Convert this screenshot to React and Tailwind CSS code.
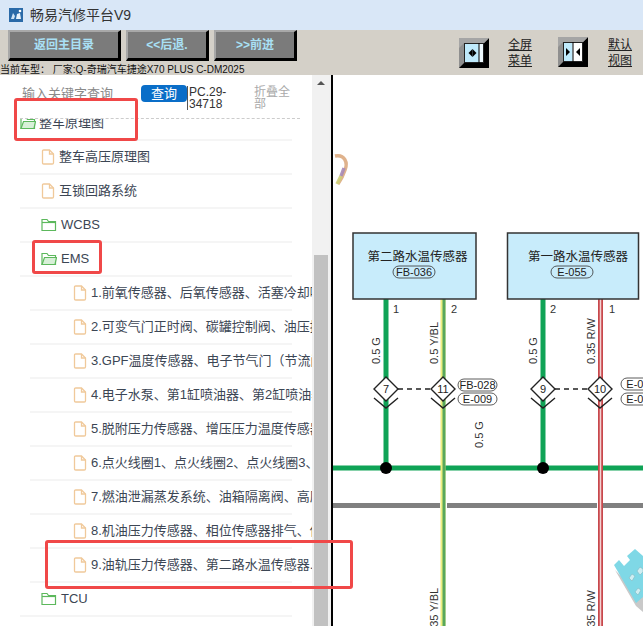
const cjk = 'font-["Liberation_Sans","Noto_Sans_CJK_SC",sans-serif]'

const rows = [
  { label: '整车高压原理图', type: 'file', level: 1 },
  { label: '互锁回路系统', type: 'file', level: 1 },
  { label: 'WCBS', type: 'folder', level: 1 },
  { label: 'EMS', type: 'open', level: 1 },
  { label: '1.前氧传感器、后氧传感器、活塞冷却喷嘴控制阀', type: 'file', level: 2 },
  { label: '2.可变气门正时阀、碳罐控制阀、油压控制阀', type: 'file', level: 2 },
  { label: '3.GPF温度传感器、电子节气门（节流阀体）', type: 'file', level: 2 },
  { label: '4.电子水泵、第1缸喷油器、第2缸喷油器', type: 'file', level: 2 },
  { label: '5.脱附压力传感器、增压压力温度传感器', type: 'file', level: 2 },
  { label: '6.点火线圈1、点火线圈2、点火线圈3、点火线圈4', type: 'file', level: 2 },
  { label: '7.燃油泄漏蒸发系统、油箱隔离阀、高压油泵', type: 'file', level: 2 },
  { label: '8.机油压力传感器、相位传感器排气、传感器', type: 'file', level: 2 },
  { label: '9.油轨压力传感器、第二路水温传感器...', type: 'file', level: 2 },
  { label: 'TCU', type: 'folder', level: 1 },
]

function FileIcon() {
  return (
    <svg width="14" height="16" viewBox="0 0 14 16" fill="none" stroke="#f0c99a" strokeWidth="1.3" className="shrink-0">
      <path d="M1.5 2.2Q1.5 1 2.7 1H8.5L12.5 5V13.8Q12.5 15 11.3 15H2.7Q1.5 15 1.5 13.8Z" />
      <path d="M8.5 1V5H12.5" />
    </svg>
  )
}

function FolderIcon({ open }) {
  return (
    <svg width="16" height="14" viewBox="0 0 16 14" fill="none" stroke="#5cb85c" strokeWidth="1.2" className="shrink-0">
      <path d="M1 12.5V1.5H6L7.5 3.5H14.5V12.5Z" />
      {open ? <path d="M1 12.5L3.5 5.5H15.5L14 12.5Z" fill="#d8f0d8" /> : <path d="M1 4.5H14.5" />}
    </svg>
  )
}

function Row({ row }) {
  const nested = row.level === 2
  return (
    <div className={`h-[34px] flex items-center border-b-2 border-[#f5f5f5] whitespace-nowrap ${nested ? 'w-[262px] ml-[10px] pl-[43px]' : 'w-[272px] pl-[21px]'}`}>
      {row.type === 'file' ? <FileIcon /> : <FolderIcon open={row.type === 'open'} />}
      <span className={`text-[13px] text-[#3c4654] ${row.type === 'file' ? 'ml-[4px]' : 'ml-[4px]'}`}>{row.label}</span>
    </div>
  )
}

function NavButton({ children, width }) {
  return (
    <button className={`${width} h-[31px] shrink-0 bg-[#7b7b7b] border-t-2 border-l-2 border-[#a8a8a8] border-r-[3px] border-b-[3px] border-r-black border-b-black text-[#a9e0f5] text-[12px] font-bold`}>
      {children}
    </button>
  )
}

function ViewIcon({ double }) {
  return (
    <svg width="30" height="30" viewBox="0 0 30 30" className="shrink-0 block">
      <rect width="30" height="30" fill="#8f8f8f" />
      <path d="M0 30L5 25H25L30 20V30Z" fill="#000" />
      <path d="M25 25V5L30 0V30Z" fill="#000" />
      <path d="M0 0H30L25 5H5L0 10Z" fill="#a5a5a5" />
      <rect x="5.5" y="5.5" width="19" height="19" fill={double ? '#fff' : '#bfeafc'} stroke="#222" />
      {double ? (
        <>
          <rect x="6" y="6" width="8.5" height="18" fill="#bfeafc" />
          <line x1="15" y1="5" x2="15" y2="25" stroke="#000" />
          <path d="M8 11L12 15L8 19Z M22 11L18 15L22 19Z" fill="#000" />
          <rect x="8" y="13" width="1.5" height="4" fill="#000" />
          <rect x="20.5" y="13" width="1.5" height="4" fill="#000" />
        </>
      ) : (
        <>
          <rect x="20" y="6" width="4" height="18" fill="#eef9fe" />
          <line x1="20" y1="5" x2="20" y2="25" stroke="#000" />
          <path d="M13.5 11L9.5 15L13.5 19Z" fill="#000" />
          <path d="M13.5 11L17.5 15L13.5 19Z" fill="#000" />
        </>
      )}
    </svg>
  )
}

function Pill({ x, y, w, h = 12, label }) {
  return (
    <g>
      <rect x={x} y={y} width={w} height={h} rx={h / 2} fill="#fff" stroke="#333" strokeWidth="0.8" />
      <text x={x + w / 2} y={y + h - 2} textAnchor="middle" fontSize="11" fill="#222">{label}</text>
    </g>
  )
}

function Splice({ x, label }) {
  return (
    <g>
      <path d={`M${x - 12} 398L${x} 408L${x + 12} 398`} fill="none" stroke="#222" strokeWidth="1.4" />
      <path d={`M${x} 377L${x + 12} 389L${x} 401L${x - 12} 389Z`} fill="#fff" stroke="#222" strokeWidth="1.4" />
      <text x={x} y="393" textAnchor="middle" fontSize="11" fill="#222">{label}</text>
    </g>
  )
}

function WireLabel({ x, y, label }) {
  return (
    <text transform={`translate(${x} ${y}) rotate(-90)`} fontSize="11" fill="#333">{label}</text>
  )
}

function Diagram() {
  return (
    <svg viewBox="333 75 310 551" className="w-[310px] h-[551px] block" fontFamily="'Liberation Sans','Noto Sans CJK SC',sans-serif">
      <rect x="333" y="75" width="310" height="551" fill="#fff" />

      <g className="blur-[0.7px]">
        <path d="M335 156C345 154 348 163 345 170C343 176 341 180 338 184" fill="none" stroke="#d9a578" strokeWidth="3.5" opacity="0.85" />
        <path d="M341 176L337 184" stroke="#cfd07a" strokeWidth="3.5" opacity="0.9" />
        <path d="M344 168L341 176" stroke="#a78bb8" strokeWidth="3.5" opacity="0.9" />
      </g>

      <line x1="333" y1="505.5" x2="643" y2="505.5" stroke="#808080" strokeWidth="5" />
      <rect x="440" y="502" width="7" height="8" fill="#fff" />
      <rect x="597" y="502" width="6" height="8" fill="#fff" />

      <line x1="386" y1="299" x2="386" y2="468" stroke="#0fa356" strokeWidth="5" />
      <line x1="543" y1="299" x2="543" y2="468" stroke="#0fa356" strokeWidth="5" />
      <line x1="333" y1="468" x2="643" y2="468" stroke="#0fa356" strokeWidth="5" />
      <circle cx="386" cy="468" r="6" fill="#000" />
      <circle cx="543" cy="468" r="6" fill="#000" />

      <line x1="443" y1="299" x2="443" y2="626" stroke="#f0ee80" strokeWidth="5" />
      <line x1="444" y1="299" x2="444" y2="626" stroke="#58a85c" strokeWidth="3" />
      <line x1="600.5" y1="299" x2="600.5" y2="626" stroke="#c8484c" strokeWidth="5" />
      <line x1="600.5" y1="299" x2="600.5" y2="626" stroke="#f3d2d2" strokeWidth="1.5" />

      <rect x="353" y="233" width="123" height="66" fill="#c8ecfb" stroke="#333" strokeWidth="1.5" />
      <rect x="507.5" y="233" width="131" height="66" fill="#c8ecfb" stroke="#333" strokeWidth="1.5" />
      <text x="417.5" y="261" textAnchor="middle" fontSize="12.5" fill="#222">第二路水温传感器</text>
      <text x="578" y="261" textAnchor="middle" fontSize="12.5" fill="#222">第一路水温传感器</text>
      <rect x="393" y="266" width="42" height="12" rx="6" fill="none" stroke="#333" strokeWidth="0.8" />
      <text x="414" y="276" textAnchor="middle" fontSize="11" fill="#222">FB-036</text>
      <rect x="551" y="266" width="42" height="12" rx="6" fill="none" stroke="#333" strokeWidth="0.8" />
      <text x="572" y="276" textAnchor="middle" fontSize="11" fill="#222">E-055</text>

      <text x="393" y="313" fontSize="11" fill="#333">1</text>
      <text x="451" y="313" fontSize="11" fill="#333">2</text>
      <text x="550" y="313" fontSize="11" fill="#333">2</text>
      <text x="609" y="313" fontSize="11" fill="#333">1</text>

      <WireLabel x="380" y="364" label="0.5 G" />
      <WireLabel x="438" y="364" label="0.5 Y/BL" />
      <WireLabel x="537" y="364" label="0.5 G" />
      <WireLabel x="595" y="364" label="0.35 R/W" />
      <WireLabel x="483" y="448" label="0.5 G" />
      <WireLabel x="438" y="636" label="0.35 Y/BL" />
      <WireLabel x="595" y="636" label="0.35 R/W" />

      <line x1="398" y1="389" x2="431" y2="389" stroke="#222" strokeWidth="1.3" strokeDasharray="5 4" />
      <line x1="555" y1="389" x2="588" y2="389" stroke="#222" strokeWidth="1.3" strokeDasharray="5 4" />
      <Splice x={386} label="7" />
      <Splice x={443} label="11" />
      <Splice x={543} label="9" />
      <Splice x={600} label="10" />
      <Pill x={458} y={379} w={39} label="FB-028" />
      <Pill x={458} y={393} w={39} label="E-009" />
      <Pill x={621} y={378} w={40} label="E-056" />
      <Pill x={621} y={393} w={40} label="E-040" />

      <path d="M615 570L622 577L634 566L643 574V612L636 606Z" fill="#c9c9c9" />
      <path d="M614 565L619 560L624 566L630 560L627 556L635 549L643 556V597L636 603Z" fill="#7fd8e6" />
      <path d="M629 578l3-4 3 2-3 5Z M637 571l3-4 3 2v3l-3 3Z M635 592l3-4 3 2-3 5Z" fill="#cfeef2" stroke="#7fb8c2" strokeWidth="0.6" />
    </svg>
  )
}

export default function App() {
  return (
    <div className={`relative w-[643px] h-[626px] overflow-hidden bg-white ${cjk}`}>
      <div className="h-[30px] bg-[#d9e7f7] flex items-center pl-[9px]">
        <svg width="14" height="14" viewBox="0 0 14 14" className="shrink-0">
          <rect width="14" height="14" fill="#2a6aa8" />
          <path d="M2 11L4 5L6 8L5 11Z" fill="#cfe3f5" />
          <path d="M7 11L8 6L11 5L12 11Z" fill="#e8f2fb" />
          <circle cx="11" cy="3" r="1.3" fill="#fff" />
        </svg>
        <span className="ml-[7px] text-[14px] text-[#333]">畅易汽修平台V9</span>
      </div>

      <div className="h-[45px] bg-[#d4d0c8] relative">
        <div className="flex gap-[5px] pl-[8px]">
          <NavButton width="w-[113px]">返回主目录</NavButton>
          <NavButton width="w-[83px]">&lt;&lt;后退.</NavButton>
          <NavButton width="w-[83px]">&gt;&gt;前进</NavButton>
          <div className="flex items-center shrink-0 ml-[157px] mt-[8px] h-[30px]">
            <ViewIcon />
            <div className="ml-[19px] w-[24px] text-[12px] leading-[16px] text-[#222] underline text-center">全屏<br />菜单</div>
            <div className="ml-[26px] -mt-[2px]"><ViewIcon double /></div>
            <div className="ml-[20px] w-[24px] text-[12px] leading-[16px] text-[#222] underline text-center">默认<br />视图</div>
          </div>
        </div>
        <div className="absolute left-0 top-[35px] text-[10px] leading-[10px] text-[#111] whitespace-nowrap">当前车型： 厂家:Q-奇瑞汽车捷途X70 PLUS C-DM2025</div>
      </div>

      <div className="flex h-[551px]">
        <div className="w-[312px] h-full overflow-hidden">
          <div className="h-[44px] ml-[20px] mr-[12px] border-b border-dashed border-[#ccc] flex items-start">
            <div className="w-[121px] pl-[2px] pt-[9px] text-[13px] leading-[20px] text-[#8a8a8a]">输入关键字查询</div>
            <button className="w-[46px] h-[17px] mt-[10px] bg-[#0a6ec8] rounded-[4px] text-white text-[13px] leading-[17px]">查询</button>
            <div className="w-[44px] mt-[11px] h-[24px] text-[12px] leading-[12px] text-[#333] border-l border-[#555] pl-[1px]">PC.29-34718</div>
            <div className="ml-[23px] w-[38px] pt-[11px] text-[12px] leading-[12px] text-[#aaa]">折叠全部</div>
          </div>
          <div className="w-[292px] ml-[20px] h-[507px] overflow-hidden">
            <div className="-mt-[12px]">
              <div className="h-[34px] w-[272px] flex items-center border-b-2 border-[#f5f5f5] whitespace-nowrap">
                <FolderIcon open />
                <span className="ml-[3px] text-[13px] text-[#3c4654]">整车原理图</span>
              </div>
              {rows.map((row) => <Row key={row.label} row={row} />)}
            </div>
          </div>
        </div>

        <div className="w-[17px] h-full bg-[#f1f1f1] flex flex-col items-center">
          <div className="h-[180px] w-full pt-[6px] flex justify-center">
            <div className="w-0 h-0 border-l-[4px] border-r-[4px] border-b-[4px] border-l-transparent border-r-transparent border-b-[#555]" />
          </div>
          <div className="w-[14px] flex-1 bg-[#c1c1c1]" />
        </div>
        <div className="w-[2px] h-full bg-[#f0f0f0]" />
        <div className="w-[2px] h-full bg-black" />
        <Diagram />
      </div>

      <div className="absolute left-[14px] top-[98px] w-[124px] h-[43px] border-[3px] border-[#f04848] rounded-[3px]" />
      <div className="absolute left-[32px] top-[240px] w-[70px] h-[34px] border-[3px] border-[#f04848] rounded-[3px]" />
      <div className="absolute left-[45px] top-[540px] w-[308px] h-[49px] border-[3px] border-[#f04848] rounded-[3px]" />
    </div>
  )
}
